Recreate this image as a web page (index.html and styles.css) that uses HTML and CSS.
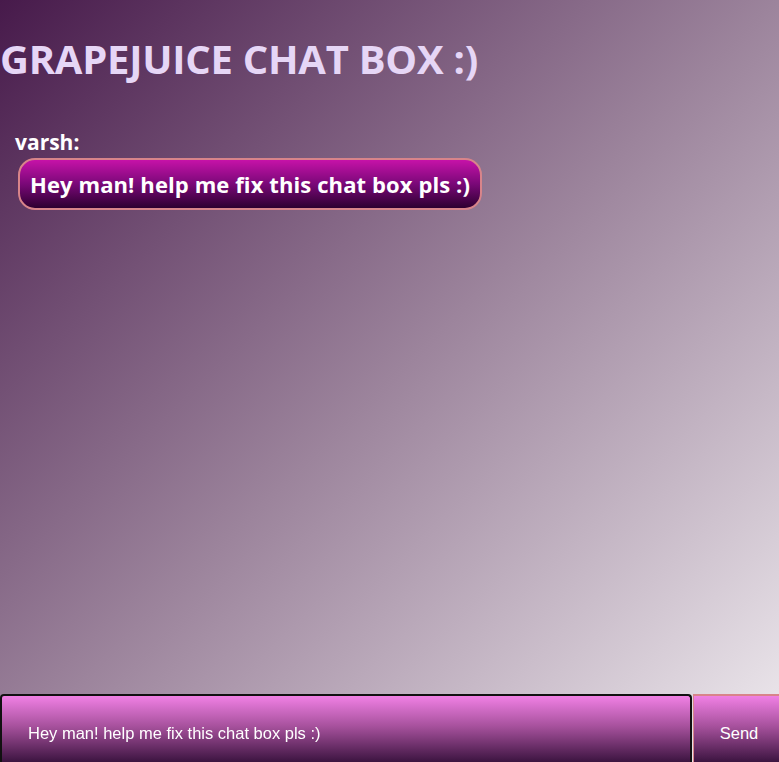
FILE: index.html
```html
<!DOCTYPE html>
<html>
<head>
<meta charset="utf-8">
<link rel="stylesheet" href="styles.css">
</head>
<body>
<h1 class="title">GRAPEJUICE CHAT BOX :)</h1>
<div class="messages">
  <div class="message">
    <div class="sender">varsh:</div>
    <div class="bubble">Hey man! help me fix this chat box pls :)</div>
  </div>
</div>
<form class="composer">
  <input class="composer-input" type="text" value="Hey man! help me fix this chat box pls :)">
  <button class="composer-send" type="button">Send</button>
</form>
</body>
</html>
```
FILE: styles.css
```css
html, body {
  margin: 0;
  padding: 0;
  height: 100%;
}
body {
  background: linear-gradient(to bottom right, #471a4b 0%, #9c849c 50%, #f0ecf0 100%);
  font-family: "Open Sans", "Noto Sans", sans-serif;
  overflow: hidden;
}
.title {
  margin: 0;
  padding-top: 35px;
  font-size: 40px;
  line-height: 48px;
  font-weight: 700;
  color: #e6d6f6;
  letter-spacing: -0.25px;
}
.messages {
  padding: 46px 0 0 15px;
}
.sender {
  color: #ffffff;
  font-weight: 700;
  font-size: 21px;
  line-height: 26px;
}
.bubble {
  display: inline-block;
  margin: 3px 0 0 3px;
  padding: 0 10px;
  height: 52px;
  line-height: 48px;
  border: 2px solid #d8848a;
  border-radius: 17px;
  background: linear-gradient(to bottom, #c612a8 0%, #7a0878 50%, #2e0030 100%);
  color: #ffffff;
  font-weight: 700;
  font-size: 22px;
  letter-spacing: 0.1px;
  box-sizing: border-box;
}
.composer {
  position: fixed;
  left: 0;
  right: 0;
  bottom: 0;
  display: flex;
  height: 68px;
  margin: 0;
}
.composer-input {
  flex: 1;
  margin: 0;
  padding: 8px 0 0 26px;
  border: 2px solid #111;
  border-bottom: none;
  border-radius: 4px 4px 0 0;
  background: linear-gradient(to bottom, #f080e4 0%, #a8529e 45%, #3c1440 100%);
  color: #ffffff;
  font-family: "Liberation Sans", Arial, sans-serif;
  font-size: 16.5px;
  outline: none;
  box-sizing: border-box;
}
.composer-send {
  width: 86px;
  margin: 0 0 0 1px;
  border: none;
  border-top: 2px solid #d8848a;
  border-left: 1px solid #d8848a;
  background: linear-gradient(to bottom, #f080e4 0%, #a8529e 45%, #3c1440 100%);
  color: #ffffff;
  font-family: "Liberation Sans", Arial, sans-serif;
  font-size: 16.5px;
  padding: 8px 0 0 5px;
}
```
